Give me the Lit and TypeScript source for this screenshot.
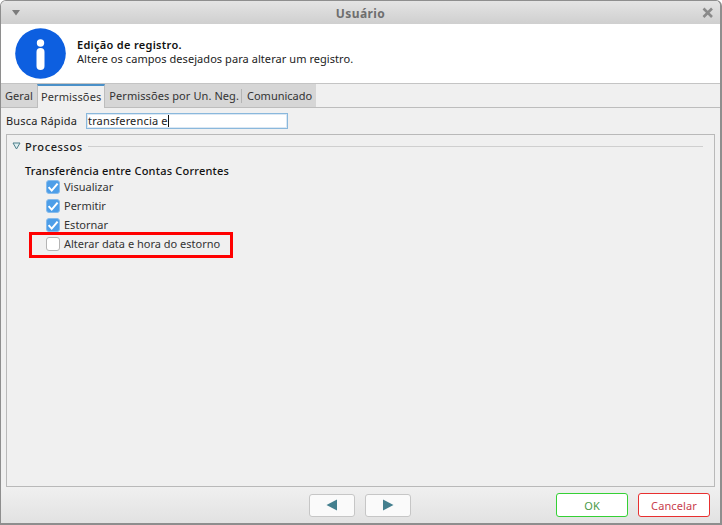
import { LitElement, html, css } from "lit";
import { customElement } from "lit/decorators.js";

const check = html`<svg class="chk" viewBox="0 0 12 12" width="12" height="12"><path d="M1.600 6.200 4.700 9.600 10.600 2.600" fill="none" stroke="#fff" stroke-width="2"/></svg>`;

@customElement("app-root")
export class AppRoot extends LitElement {
  static styles = css`
    :host { display: block; width: 722px; height: 525px; font-family: "Noto Sans", "Open Sans", sans-serif; font-size: 11px; color: #222; }
    * { box-sizing: border-box; }
    .win { width: 722px; height: 525px; display: flex; flex-direction: column; background: #f0f0f0; border: 2px solid #8e8e8e; border-width: 1px 2px 2px 1px; border-radius: 6px 6px 0 0; overflow: hidden; }
    .title { height: 23px; flex: none; display: flex; align-items: center; justify-content: space-between; padding: 1px 4px 0 10px; background: linear-gradient(#e4e4e4, #cfcfcf); }
    .title span { font-weight: 700; font-size: 12px; color: #6e6e6e; letter-spacing: .4px; }
    .head { height: 60px; flex: none; background: #fff; display: flex; align-items: center; gap: 11px; padding: 0 0 0 14px; border-bottom: 1px solid #c4c4c4; }
    .head > div { margin-bottom: 4px; }
    .head b { display: block; font-weight: 600; color: #111; line-height: 14px; letter-spacing: .3px; }
    .head p { margin: 0; line-height: 14px; color: #222; letter-spacing: .06px; }
    .tabs { height: 24px; flex: none; display: flex; align-items: flex-end; background: #f0f0f0; border-bottom: 1px solid #bdbdbd; }
    .tabbar { display: flex; height: 23px; background: #d6d6d6; align-items: center; }
    .tab { padding: 0 2px 0 4px; line-height: 14px; color: #333; letter-spacing: .08px; border-right: 1px solid #b4b4b4; }
    .tab:last-child { border-right: 0; padding: 0 4px 0 5px; letter-spacing: 0; }
    .tab.on { height: 24px; margin-top: -1px; margin-bottom: -1px; background: #f0f0f0; border: 1px solid #bdbdbd; border-top: 2px solid #4a90c8; border-bottom: 0; padding: 0 3px 0 3px; line-height: 21px; z-index: 1; letter-spacing: .12px; }
    .tab.first { border-right: 0; padding-right: 4px; }
    .search { height: 26px; flex: none; display: flex; align-items: center; padding: 0 0 1px 5px; letter-spacing: .16px; }
    .search label { width: 80px; }
    .field { width: 202px; height: 16px; background: #fff; border: 1px solid #8ab8dc; box-shadow: inset 0 0 0 1px #dbe8f4; padding-left: 1px; line-height: 14px; color: #222; display: flex; align-items: center; }
    .caret { width: 1px; height: 12px; background: #111; }
    .panel { margin: 0 5px; flex: 1; border: 1px solid #b9b9b9; padding: 4px 0 0 5px; background: #f0f0f0; }
    .legend { display: flex; align-items: center; height: 14px; gap: 4px; padding-right: 11px; font-weight: 500; letter-spacing: .6px; color: #222; }
    .legend i { flex: 1; height: 1px; background: #cfcfcf; margin-left: 1px; }
    .group { margin: 11px 0 0 13px; font-weight: 500; line-height: 14px; letter-spacing: .22px; color: #111; }
    .items { position: relative; display: flex; flex-direction: column; gap: 4px; margin: 1px 0 0 34px; }
    .item { display: flex; align-items: flex-start; gap: 4px; height: 15px; padding-top: 1px; line-height: 14px; color: #333; }
    .box { width: 14px; height: 14px; border-radius: 3px; background: #4d9ee8; border: 1px solid #86bbec; flex: none; display: block; }
    .box.off { background: #fff; border: 1px solid #b4b4b4; }
    .chk { display: block; }
    .hl { position: absolute; left: -17px; top: 53px; width: 204px; height: 26px; border: 3px solid #f00; }
    .foot { height: 36px; flex: none; display: flex; align-items: center; padding: 0 10px 0 308px; background: linear-gradient(#f0f0f0, #e2e2e2); }
    .btn { height: 23px; width: 46px; border: 1px solid #c6c6c6; border-radius: 3px; background: #fafafa; display: flex; align-items: center; justify-content: center; }
    .btn + .btn { margin-left: 10px; }
    .act { width: 72px; height: 24px; background: #fff; border-radius: 3px; display: flex; align-items: center; justify-content: center; letter-spacing: .1px; }
    .ok { margin-left: auto; border: 1px solid #35d035; color: #4a9a4a; }
    .cancel { margin-left: 10px; border: 1px solid #e83030; color: #c8404c; }
  `;

  render() {
    const item = (t: string, on: boolean) => html`<div class="item"><span class="box ${on ? "" : "off"}">${on ? check : ""}</span>${t}</div>`;
    return html`<div class="win">
      <div class="title">
        <svg width="10" height="6" viewBox="0 0 10 6"><path d="M1 0h8L5 5.500z" fill="#7c7c7c"/></svg>
        <span>Usuário</span>
        <svg width="16" height="16" viewBox="0 0 16 16"><path d="M3.500 3.500 12 12M12 3.500 3.500 12" stroke="#8a8a8a" stroke-width="2.600" fill="none"/></svg>
      </div>
      <div class="head">
        <svg width="51" height="51" viewBox="0 0 51 51"><circle cx="25.500" cy="25.500" r="25.300" fill="#0d5fe0"/><circle cx="25.500" cy="15" r="3.700" fill="#fff"/><rect x="21.500" y="20" width="8" height="22" rx="4" fill="#fff"/></svg>
        <div><b>Edição de registro.</b><p>Altere os campos desejados para alterar um registro.</p></div>
      </div>
      <div class="tabs"><div class="tabbar">
        <div class="tab first">Geral</div>
        <div class="tab on">Permissões</div>
        <div class="tab">Permissões por Un. Neg.</div>
        <div class="tab">Comunicado</div>
      </div></div>
      <div class="search"><label>Busca Rápida</label><div class="field">transferencia e<span class="caret"></span></div></div>
      <div class="panel">
        <div class="legend"><svg width="9" height="8" viewBox="0 0 9 8"><path d="M1 1h7L4.500 7z" fill="#dfeef0" stroke="#4d7f8a"/></svg><span>Processos</span><i></i></div>
        <div class="group">Transferência entre Contas Correntes</div>
        <div class="items">
          ${item("Visualizar", true)}${item("Permitir", true)}${item("Estornar", true)}${item("Alterar data e hora do estorno", false)}
          <div class="hl"></div>
        </div>
      </div>
      <div class="foot">
        <div class="btn"><svg width="12" height="12" viewBox="0 0 12 12"><path d="M11 0.500V11.500L0.500 6z" fill="#437f8e"/></svg></div>
        <div class="btn"><svg width="12" height="12" viewBox="0 0 12 12"><path d="M1 0.500V11.500L11.500 6z" fill="#437f8e"/></svg></div>
        <div class="act ok">OK</div>
        <div class="act cancel">Cancelar</div>
      </div>
    </div>`;
  }
}
